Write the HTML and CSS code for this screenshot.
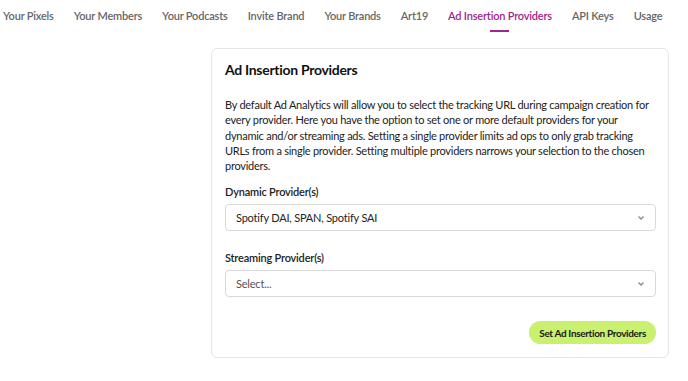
FILE: index.html
```html
<!DOCTYPE html>
<html>
<head>
<meta charset="utf-8">
<link rel="stylesheet" href="styles.css">
</head>
<body>
<nav class="tabs">
  <a class="tab">Your Pixels</a>
  <a class="tab">Your Members</a>
  <a class="tab">Your Podcasts</a>
  <a class="tab">Invite Brand</a>
  <a class="tab">Your Brands</a>
  <a class="tab">Art19</a>
  <a class="tab active">Ad Insertion Providers</a>
  <a class="tab">API Keys</a>
  <a class="tab">Usage</a>
</nav>
<main class="main">
  <section class="card">
    <h1 class="title">Ad Insertion Providers</h1>
    <p class="desc">By default Ad Analytics will allow you to select the tracking URL during campaign creation for<br>every provider. Here you have the option to set one or more default providers for your<br>dynamic and/or streaming ads. Setting a single provider limits ad ops to only grab tracking<br>URLs from a single provider. Setting multiple providers narrows your selection to the chosen<br>providers.</p>
    <div class="field">
      <label class="label">Dynamic Provider(s)</label>
      <div class="select">
        <span class="value">Spotify DAI, SPAN, Spotify SAI</span>
        <svg class="chev" width="8" height="6" viewBox="0 0 8 6"><path d="M1.5 1.5 L4 4 L6.5 1.5" fill="none" stroke="#888" stroke-width="1.3"/></svg>
      </div>
    </div>
    <div class="field">
      <label class="label">Streaming Provider(s)</label>
      <div class="select">
        <span class="value placeholder">Select...</span>
        <svg class="chev" width="8" height="6" viewBox="0 0 8 6"><path d="M1.5 1.5 L4 4 L6.5 1.5" fill="none" stroke="#888" stroke-width="1.3"/></svg>
      </div>
    </div>
    <div class="actions">
      <button class="btn">Set Ad Insertion Providers</button>
    </div>
  </section>
</main>
</body>
</html>
```
FILE: styles.css
```css
* { box-sizing: border-box; }
body {
  margin: 0;
  background: #fff;
  font-family: "Lato", "Open Sans", sans-serif;
  color: #1a1a1a;
}
.tabs {
  display: flex;
  gap: 20px;
  padding: 0 0 0 3px;
  height: 33px;
  white-space: nowrap;
}
.tab {
  position: relative;
  font-size: 11px;
  letter-spacing: -0.2px;
  font-weight: 600;
  color: #666;
  line-height: 32px;
}
.tab.active { color: #a2248c; }
.tab.active::after {
  content: "";
  position: absolute;
  left: 50%;
  margin-left: -10px;
  width: 19px;
  height: 2px;
  bottom: 1px;
  background: #a2248c;
}
.main {
  padding: 15px 0 0 211px;
}
.card {
  width: 458px;
  height: 310px;
  border: 1px solid #e6e6e6;
  border-radius: 6px;
  padding: 11px 12px 0 13px;
}
.title {
  margin: 0;
  font-size: 14px;
  letter-spacing: -0.3px;
  font-weight: 700;
  line-height: 20px;
  color: #111;
}
.desc {
  margin: 17px 0 0;
  font-size: 11px;
  letter-spacing: -0.25px;
  line-height: 15.3px;
  color: #222;
  white-space: nowrap;
}
.field { margin-top: 12px; }
.field + .field { margin-top: 20px; }
.label {
  display: block;
  font-size: 11px;
  letter-spacing: -0.2px;
  font-weight: 600;
  color: #222;
  line-height: 14px;
}
.select {
  margin-top: 5px;
  height: 27px;
  border: 1px solid #d9d9d9;
  border-radius: 4px;
  display: flex;
  align-items: center;
  justify-content: space-between;
  padding: 0 10px;
}
.value { font-size: 11px; letter-spacing: -0.2px; color: #222; }
.value.placeholder { color: #555; }
.chev { display: block; }
.actions {
  display: flex;
  justify-content: flex-end;
  margin-top: 24px;
}
.btn {
  font-family: inherit;
  border: 0;
  background: #c9f06e;
  border-radius: 12px;
  height: 23px;
  padding: 0 10px;
  font-size: 10px;
  letter-spacing: -0.35px;
  font-weight: 700;
  color: #1a1a1a;
}
```
